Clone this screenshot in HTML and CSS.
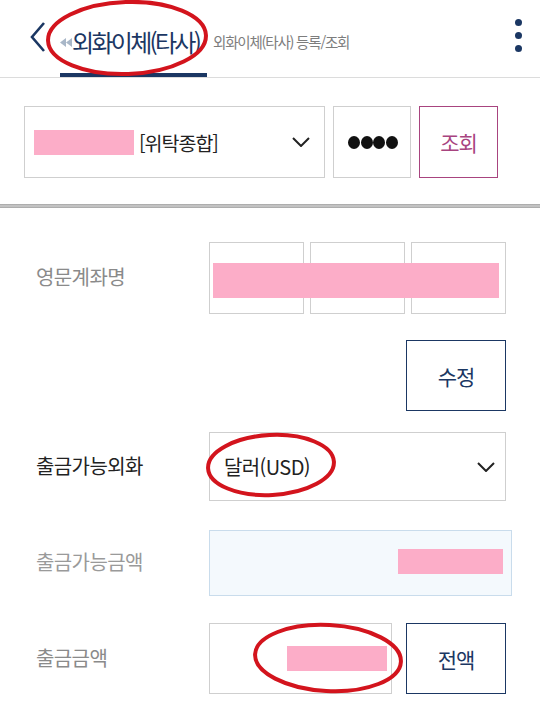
FILE: index.html
```html
<!DOCTYPE html>
<html lang="ko">
<head>
<meta charset="utf-8">
<title>외화이체(타사)</title>
<link rel="stylesheet" href="styles.css">
</head>
<body>
<div class="page">
  <header class="topbar">
    <button class="back" aria-label="뒤로">
      <svg width="16" height="30" viewBox="0 0 16 30"><path d="M14 1 L2 15 L14 29" fill="none" stroke="#1b3763" stroke-width="2.6" stroke-linejoin="miter"/></svg>
    </button>
    <div class="tab">
      <svg class="dbl" width="12" height="9" viewBox="0 0 12 9"><path d="M0 4.5 L6 0 L6 9 Z M6 4.5 L12 0 L12 9 Z" fill="#a9b7c8"/></svg>
      <span class="tab-title">외화이체(타사)</span>
    </div>
    <span class="sub">외화이체(타사) 등록/조회</span>
    <button class="kebab" aria-label="메뉴"><span></span><span></span><span></span></button>
  </header>

  <section class="acct">
    <div class="acct-select">
      <span class="mask acct-mask"></span>
      <span class="acct-type">[위탁종합]</span>
      <svg class="chev" width="18" height="10" viewBox="0 0 18 10"><path d="M1 1 L9 9 L17 1" fill="none" stroke="#222" stroke-width="2"/></svg>
    </div>
    <div class="pw"><span class="dot"></span><span class="dot"></span><span class="dot"></span><span class="dot"></span></div>
    <button class="btn-query">조회</button>
  </section>

  <div class="divider"></div>

  <section class="form">
    <div class="row row-name">
      <span class="label">영문계좌명</span>
      <div class="name-boxes">
        <span class="box"></span><span class="box"></span><span class="box"></span>
        <span class="mask name-mask"></span>
      </div>
    </div>
    <div class="row row-edit">
      <button class="btn-navy">수정</button>
    </div>
    <div class="row row-cur">
      <span class="label dark">출금가능외화</span>
      <div class="select">
        <span class="select-text">달러(USD)</span>
        <svg class="chev" width="18" height="10" viewBox="0 0 18 10"><path d="M1 1 L9 9 L17 1" fill="none" stroke="#222" stroke-width="2"/></svg>
      </div>
    </div>
    <div class="row row-avail">
      <span class="label light">출금가능금액</span>
      <div class="readonly"><span class="mask avail-mask"></span></div>
    </div>
    <div class="row row-amt">
      <span class="label">출금금액</span>
      <div class="amount"><span class="mask amt-mask"></span></div>
      <button class="btn-navy btn-all">전액</button>
    </div>
  </section>

  <svg class="annotations" width="540" height="713" viewBox="0 0 540 713">
    <ellipse cx="127" cy="38" rx="79" ry="36" fill="none" stroke="#d3141d" stroke-width="4" transform="rotate(-2 127 38)"/>
    <ellipse cx="271" cy="465" rx="63" ry="30" fill="none" stroke="#d3141d" stroke-width="4" transform="rotate(-3 271 465)"/>
    <ellipse cx="328" cy="658" rx="73" ry="33" fill="none" stroke="#d3141d" stroke-width="4" transform="rotate(3 328 658)"/>
  </svg>
</div>
</body>
</html>
```

FILE: styles.css
```css
* { box-sizing: border-box; }
html, body { margin: 0; padding: 0; background: #fff; }
body { font-family: "Noto Sans CJK KR", "Noto Sans", sans-serif; color: #222; }
button { font-family: inherit; background: #fff; padding: 0; margin: 0; cursor: pointer; }

.page { position: relative; width: 540px; height: 713px; overflow: hidden; background: #fff; }

/* header */
.topbar {
  display: flex;
  height: 78px;
  border-bottom: 1px solid #dcdcdc;
}
.back { border: 0; background: none; width: 16px; height: 30px; margin: 22px 0 0 30px; display: block; align-self: flex-start; }
.back svg { display: block; }
.tab {
  margin-left: 14px;
  width: 147px;
  height: 77px;
  border-bottom: 4px solid #1b3763;
  display: flex;
  align-items: center;
  padding-top: 11px;
}
.dbl { flex: none; margin-top: 1px; }
.tab-title {
  font-size: 24px;
  letter-spacing: -2.7px;
  color: #1b3763;
  white-space: nowrap;
  line-height: 1;
}
.sub {
  margin-left: 6px;
  align-self: center;
  padding-top: 5px;
  font-size: 14.5px;
  letter-spacing: -1.2px;
  color: #7d7d7d;
  white-space: nowrap;
}
.kebab {
  border: 0; background: none;
  margin: 19px 18px 0 auto;
  align-self: flex-start;
  display: flex; flex-direction: column; gap: 6px;
}
.kebab span { width: 7px; height: 7px; border-radius: 50%; background: #1b3763; display: block; }

/* account row */
.acct { display: flex; gap: 8px; padding: 28px 0 0 24px; }
.acct-select {
  width: 301px; height: 72px;
  border: 1px solid #cfcfcf;
  display: flex; align-items: center;
  padding: 0 14px 0 9px;
}
.mask { background: #fcadc8; display: block; }
.acct-mask { width: 100px; height: 25px; }
.acct-type { margin-left: 5px; font-size: 19.5px; letter-spacing: -1px; color: #222; }
.chev { margin-left: auto; flex: none; display: block; }
.pw {
  width: 78px; height: 72px;
  border: 1px solid #cfcfcf;
  display: flex; align-items: center; justify-content: center;
  padding-left: 2px;
}
.pw .dot { width: 12px; height: 13px; border-radius: 50%; background: #111; margin-right: 0.5px; }
.btn-query {
  width: 79px; height: 72px;
  border: 1.5px solid #a8447f;
  color: #a8447f;
  font-size: 21px; letter-spacing: -1px;
}

.divider {
  margin-top: 26px;
  height: 4px;
  background: linear-gradient(#a3a3a3, #cdcdcd 50%, #a3a3a3);
}

/* form */
.form { padding: 34px 34px 0 36px; }
.row { display: flex; align-items: center; }
.label { width: 173px; flex: none; font-size: 20px; letter-spacing: -0.6px; color: #8a8a8a; padding-bottom: 3px; }
.label.dark { color: #222; }
.label.light { color: #9a9a9a; }

.row-name { height: 72px; }
.name-boxes { position: relative; display: flex; gap: 6px; width: 297px; height: 72px; }
.name-boxes .box { flex: 1; border: 1px solid #cfcfcf; }
.name-mask { position: absolute; left: 4px; top: 21px; width: 286px; height: 35px; }

.row-edit { margin-top: 26px; justify-content: flex-end; }
.btn-navy {
  width: 100px; height: 71px;
  border: 1.5px solid #1b3763;
  color: #1b3763;
  font-size: 21px; letter-spacing: -1px;
}

.row-cur { margin-top: 21px; }
.select {
  width: 297px; height: 69px;
  border: 1px solid #cfcfcf;
  display: flex; align-items: center;
  padding: 0 10px 0 14px;
}
.select-text { font-size: 20px; letter-spacing: -0.6px; color: #222; }

.row-avail { margin-top: 29px; margin-right: -6px; }
.readonly {
  width: 303px; height: 66px;
  background: #f4f9fd;
  border: 1.5px solid #c9dcec;
  display: flex; align-items: center; justify-content: flex-end;
  padding-right: 8px;
}
.avail-mask { width: 105px; height: 25px; margin-top: -3px; }

.row-amt { margin-top: 27px; }
.amount {
  width: 183px; height: 71px;
  border: 1px solid #cfcfcf;
  display: flex; align-items: center; justify-content: flex-end;
  padding-right: 4px;
}
.amt-mask { width: 100px; height: 25px; }
.btn-all { margin-left: 14px; }

.annotations { position: absolute; left: 0; top: 0; pointer-events: none; }
```
